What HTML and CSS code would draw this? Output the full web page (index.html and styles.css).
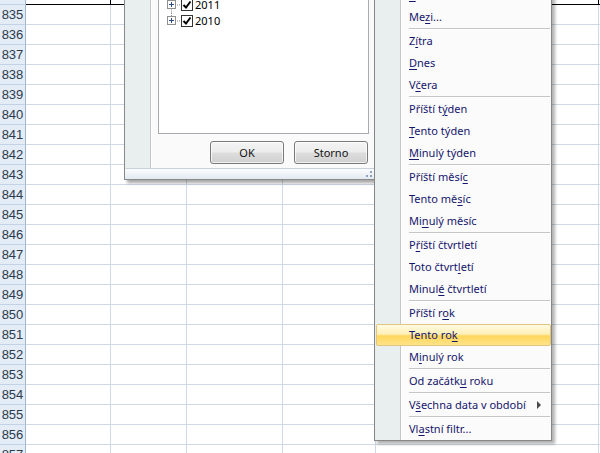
FILE: index.html
```html
<!DOCTYPE html>
<html lang="cs">
<head>
<meta charset="utf-8">
<title>Filtr data</title>
<link rel="stylesheet" href="styles.css">
</head>
<body>
<div class="sheet">
  <div class="row top"><div class="rh"></div><div class="c a"></div><div class="c b"></div><div class="c cc"></div><div class="c d"></div><div class="c e"></div><div class="c f"></div></div>
  <div class="row"><div class="rh">835</div><div class="c a"></div><div class="c b"></div><div class="c cc"></div><div class="c d"></div><div class="c e"></div><div class="c f"></div></div>
  <div class="row"><div class="rh">836</div><div class="c a"></div><div class="c b"></div><div class="c cc"></div><div class="c d"></div><div class="c e"></div><div class="c f"></div></div>
  <div class="row"><div class="rh">837</div><div class="c a"></div><div class="c b"></div><div class="c cc"></div><div class="c d"></div><div class="c e"></div><div class="c f"></div></div>
  <div class="row"><div class="rh">838</div><div class="c a"></div><div class="c b"></div><div class="c cc"></div><div class="c d"></div><div class="c e"></div><div class="c f"></div></div>
  <div class="row"><div class="rh">839</div><div class="c a"></div><div class="c b"></div><div class="c cc"></div><div class="c d"></div><div class="c e"></div><div class="c f"></div></div>
  <div class="row"><div class="rh">840</div><div class="c a"></div><div class="c b"></div><div class="c cc"></div><div class="c d"></div><div class="c e"></div><div class="c f"></div></div>
  <div class="row"><div class="rh">841</div><div class="c a"></div><div class="c b"></div><div class="c cc"></div><div class="c d"></div><div class="c e"></div><div class="c f"></div></div>
  <div class="row"><div class="rh">842</div><div class="c a"></div><div class="c b"></div><div class="c cc"></div><div class="c d"></div><div class="c e"></div><div class="c f"></div></div>
  <div class="row"><div class="rh">843</div><div class="c a"></div><div class="c b"></div><div class="c cc"></div><div class="c d"></div><div class="c e"></div><div class="c f"></div></div>
  <div class="row"><div class="rh">844</div><div class="c a"></div><div class="c b"></div><div class="c cc"></div><div class="c d"></div><div class="c e"></div><div class="c f"></div></div>
  <div class="row"><div class="rh">845</div><div class="c a"></div><div class="c b"></div><div class="c cc"></div><div class="c d"></div><div class="c e"></div><div class="c f"></div></div>
  <div class="row"><div class="rh">846</div><div class="c a"></div><div class="c b"></div><div class="c cc"></div><div class="c d"></div><div class="c e"></div><div class="c f"></div></div>
  <div class="row"><div class="rh">847</div><div class="c a"></div><div class="c b"></div><div class="c cc"></div><div class="c d"></div><div class="c e"></div><div class="c f"></div></div>
  <div class="row"><div class="rh">848</div><div class="c a"></div><div class="c b"></div><div class="c cc"></div><div class="c d"></div><div class="c e"></div><div class="c f"></div></div>
  <div class="row"><div class="rh">849</div><div class="c a"></div><div class="c b"></div><div class="c cc"></div><div class="c d"></div><div class="c e"></div><div class="c f"></div></div>
  <div class="row"><div class="rh">850</div><div class="c a"></div><div class="c b"></div><div class="c cc"></div><div class="c d"></div><div class="c e"></div><div class="c f"></div></div>
  <div class="row"><div class="rh">851</div><div class="c a"></div><div class="c b"></div><div class="c cc"></div><div class="c d"></div><div class="c e"></div><div class="c f"></div></div>
  <div class="row"><div class="rh">852</div><div class="c a"></div><div class="c b"></div><div class="c cc"></div><div class="c d"></div><div class="c e"></div><div class="c f"></div></div>
  <div class="row"><div class="rh">853</div><div class="c a"></div><div class="c b"></div><div class="c cc"></div><div class="c d"></div><div class="c e"></div><div class="c f"></div></div>
  <div class="row"><div class="rh">854</div><div class="c a"></div><div class="c b"></div><div class="c cc"></div><div class="c d"></div><div class="c e"></div><div class="c f"></div></div>
  <div class="row"><div class="rh">855</div><div class="c a"></div><div class="c b"></div><div class="c cc"></div><div class="c d"></div><div class="c e"></div><div class="c f"></div></div>
  <div class="row"><div class="rh">856</div><div class="c a"></div><div class="c b"></div><div class="c cc"></div><div class="c d"></div><div class="c e"></div><div class="c f"></div></div>
  <div class="row"><div class="rh">857</div><div class="c a"></div><div class="c b"></div><div class="c cc"></div><div class="c d"></div><div class="c e"></div><div class="c f"></div></div>
</div>

<div class="dropdown">
  <div class="dd-main">
    <div class="dd-strip"></div>
    <div class="dd-content">
      <div class="tree">
        <div class="node"><span class="lead"></span><span class="chk"><svg width="10" height="10" viewBox="0 0 10 10"><path d="M1.5 5 L4 7.5 L8.5 1.5" fill="none" stroke="#000" stroke-width="2"/></svg></span><span class="label">(Vybrat vše)</span></div>
        <div class="node"><svg class="exp" width="14" height="16" viewBox="0 0 14 16"><path d="M4.5 11.5 V16" stroke="#8a8a8a" stroke-dasharray="1 1"/><path d="M10 8 H14" stroke="#8a8a8a" stroke-dasharray="1 1"/><rect x="0.5" y="3.5" width="8" height="8" fill="#fff" stroke="#8f8f8f"/><path d="M2 7.5 H7 M4.5 5 V10" stroke="#2b4a8a"/></svg><span class="chk"><svg width="10" height="10" viewBox="0 0 10 10"><path d="M1.5 5 L4 7.5 L8.5 1.5" fill="none" stroke="#000" stroke-width="2"/></svg></span><span class="label">2013</span></div>
        <div class="node"><svg class="exp" width="14" height="16" viewBox="0 0 14 16"><path d="M4.5 0 V3.5 M4.5 11.5 V16" stroke="#8a8a8a" stroke-dasharray="1 1"/><path d="M10 8 H14" stroke="#8a8a8a" stroke-dasharray="1 1"/><rect x="0.5" y="3.5" width="8" height="8" fill="#fff" stroke="#8f8f8f"/><path d="M2 7.5 H7 M4.5 5 V10" stroke="#2b4a8a"/></svg><span class="chk"><svg width="10" height="10" viewBox="0 0 10 10"><path d="M1.5 5 L4 7.5 L8.5 1.5" fill="none" stroke="#000" stroke-width="2"/></svg></span><span class="label">2012</span></div>
        <div class="node"><svg class="exp" width="14" height="16" viewBox="0 0 14 16"><path d="M4.5 0 V3.5 M4.5 11.5 V16" stroke="#8a8a8a" stroke-dasharray="1 1"/><path d="M10 8 H14" stroke="#8a8a8a" stroke-dasharray="1 1"/><rect x="0.5" y="3.5" width="8" height="8" fill="#fff" stroke="#8f8f8f"/><path d="M2 7.5 H7 M4.5 5 V10" stroke="#2b4a8a"/></svg><span class="chk"><svg width="10" height="10" viewBox="0 0 10 10"><path d="M1.5 5 L4 7.5 L8.5 1.5" fill="none" stroke="#000" stroke-width="2"/></svg></span><span class="label">2011</span></div>
        <div class="node"><svg class="exp" width="14" height="16" viewBox="0 0 14 16"><path d="M4.5 0 V3.5" stroke="#8a8a8a" stroke-dasharray="1 1"/><path d="M10 8 H14" stroke="#8a8a8a" stroke-dasharray="1 1"/><rect x="0.5" y="3.5" width="8" height="8" fill="#fff" stroke="#8f8f8f"/><path d="M2 7.5 H7 M4.5 5 V10" stroke="#2b4a8a"/></svg><span class="chk"><svg width="10" height="10" viewBox="0 0 10 10"><path d="M1.5 5 L4 7.5 L8.5 1.5" fill="none" stroke="#000" stroke-width="2"/></svg></span><span class="label">2010</span></div>
      </div>
      <div class="dd-buttons">
        <button class="btn">OK</button>
        <button class="btn">Storno</button>
      </div>
    </div>
  </div>
  <div class="dd-grip">
    <svg width="7" height="7" viewBox="0 0 7 7"><rect x="4" y="0" width="2" height="2" fill="#8fa3bd"/><rect x="0" y="4" width="2" height="2" fill="#8fa3bd"/><rect x="4" y="4" width="2" height="2" fill="#8fa3bd"/></svg>
  </div>
</div>

<div class="menu">
  <div class="mi">Př<u>e</u>d...</div>
  <div class="mi"><u>P</u>o...</div>
  <div class="mi">Me<u>z</u>i...</div>
  <div class="sep"></div>
  <div class="mi">Z<u>í</u>tra</div>
  <div class="mi"><u>D</u>nes</div>
  <div class="mi">V<u>č</u>era</div>
  <div class="sep"></div>
  <div class="mi">Příští t<u>ý</u>den</div>
  <div class="mi"><u>T</u>ento týden</div>
  <div class="mi"><u>M</u>inulý týden</div>
  <div class="sep"></div>
  <div class="mi">Příští měsí<u>c</u></div>
  <div class="mi">Tento mě<u>s</u>íc</div>
  <div class="mi">Mi<u>n</u>ulý měsíc</div>
  <div class="sep"></div>
  <div class="mi">P<u>ř</u>íští čtvrtletí</div>
  <div class="mi">Toto čtvrt<u>l</u>etí</div>
  <div class="mi">Minul<u>é</u> čtvrtletí</div>
  <div class="sep"></div>
  <div class="mi">Příští r<u>o</u>k</div>
  <div class="mi hot">Tento ro<u>k</u></div>
  <div class="mi">M<u>i</u>nulý rok</div>
  <div class="sep"></div>
  <div class="mi">Od začátk<u>u</u> roku</div>
  <div class="sep"></div>
  <div class="mi sub"><span>V<u>š</u>echna data v období</span><span class="arrow"></span></div>
  <div class="sep"></div>
  <div class="mi">Vl<u>a</u>stní filtr...</div>
</div>
</body>
</html>
```

FILE: styles.css
```css
* {
  box-sizing: border-box;
}

html, body {
  margin: 0;
  width: 600px;
  height: 453px;
  overflow: hidden;
}

body {
  position: relative;
  background: #ffffff;
  font-family: "Noto Sans", "DejaVu Sans", sans-serif;
}

/* ---------- spreadsheet grid ---------- */
.sheet {
  display: flex;
  flex-direction: column;
}

.row {
  display: flex;
  height: 20px;
  flex: none;
}

.row.top {
  height: 5px;
}

.rh {
  width: 26px;
  flex: none;
  background: #e4ecf7;
  border-right: 1px solid #9eb6ce;
  border-bottom: 1px solid #c3d3e7;
  font-family: "Liberation Sans", Arial, sans-serif;
  font-size: 13px;
  line-height: 20px;
  color: #2c3b4c;
  text-align: center;
}

.c {
  flex: none;
  border-right: 1px solid #d0d7e5;
  border-bottom: 1px solid #d0d7e5;
}

.c.a { width: 85px; }
.c.b { width: 76px; }
.c.cc { width: 96px; }
.c.d { width: 93px; }
.c.e { width: 223px; }
.c.f { flex: 1; border-right: none; }

.row.top .c {
  border-bottom-color: #000000;
  border-right-color: #000000;
}

/* ---------- autofilter dropdown ---------- */
.dropdown {
  position: absolute;
  left: 124px;
  top: -61px;
  width: 251px;
  height: 241px;
  border: 1px solid #8a8a8a;
  background: #fafafa;
  display: flex;
  flex-direction: column;
  box-shadow: 3px 3px 3px rgba(0, 0, 0, 0.35);
}

.dd-main {
  flex: 1;
  display: flex;
}

.dd-strip {
  width: 26px;
  flex: none;
  background: #e9eeee;
  border-right: 1px solid #c5c5c5;
  box-shadow: 1px 0 0 #ffffff;
}

.dd-content {
  flex: 1;
  display: flex;
  flex-direction: column;
  padding: 7px 5px 4px 7px;
}

.tree {
  flex: 1;
  background: #ffffff;
  border: 1px solid #a7abb0;
  padding: 1px 0 0 8px;
  overflow: hidden;
}

.node {
  display: flex;
  align-items: center;
  height: 16px;
}

.lead {
  width: 14px;
  flex: none;
}

.exp {
  flex: none;
  display: block;
}

.chk {
  width: 12px;
  height: 12px;
  flex: none;
  border: 1px solid #333333;
  background: #ffffff;
  display: flex;
  align-items: center;
  justify-content: center;
  margin-left: 0;
}

.label {
  margin-left: 2px;
  font-size: 11px;
  line-height: 16px;
  color: #000000;
}

.dd-buttons {
  display: flex;
  justify-content: flex-end;
  gap: 10px;
  margin-top: 7px;
  padding-right: 1px;
}

.btn {
  width: 74px;
  height: 23px;
  border: 1px solid #7a7a7a;
  border-radius: 3px;
  background: linear-gradient(#f4f4f4 0%, #ececec 48%, #dddddd 52%, #d0d0d0 100%);
  box-shadow: inset 0 0 0 1px rgba(255, 255, 255, 0.7);
  font-family: "Noto Sans", "DejaVu Sans", sans-serif;
  font-size: 11px;
  color: #111111;
  padding: 0;
}

.dd-grip {
  height: 11px;
  flex: none;
  border-top: 1px solid #c9d3de;
  background: linear-gradient(#fbfcfd, #e3e9f1);
  display: flex;
  justify-content: flex-end;
  align-items: flex-end;
  padding: 0 1px 1px 0;
}

.dd-grip svg {
  display: block;
}

/* ---------- date filter submenu ---------- */
.menu {
  position: absolute;
  left: 374px;
  top: -40px;
  width: 178px;
  border: 1px solid #868686;
  background: linear-gradient(to right, #e9eeee 0 25px, #c5c5c5 25px 26px, #ffffff 26px 27px, #fbfbfb 27px);
  padding: 1px 0 0 1px;
  box-shadow: 3px 3px 3px rgba(0, 0, 0, 0.3);
}

.mi {
  height: 22px;
  border: 1px solid transparent;
  padding-left: 32px;
  font-size: 11px;
  line-height: 20px;
  color: #15156b;
  white-space: nowrap;
}

.mi u {
  text-decoration: underline;
  text-decoration-thickness: 1px;
  text-underline-offset: 2px;
}

.mi.hot {
  border-color: #e2c67f;
  border-radius: 2px;
  background: linear-gradient(#fffbe2 0%, #fff0b8 45%, #ffd75b 55%, #ffe38a 100%);
}

.mi.sub {
  display: flex;
  align-items: center;
  justify-content: space-between;
  padding-right: 9px;
}

.arrow {
  width: 0;
  height: 0;
  border-left: 4px solid #4a4a4a;
  border-top: 4px solid transparent;
  border-bottom: 4px solid transparent;
}

.sep {
  height: 2px;
  margin-left: 33px;
  margin-right: 1px;
  border-top: 1px solid #c5c5c5;
  border-bottom: 1px solid #ffffff;
}
```
